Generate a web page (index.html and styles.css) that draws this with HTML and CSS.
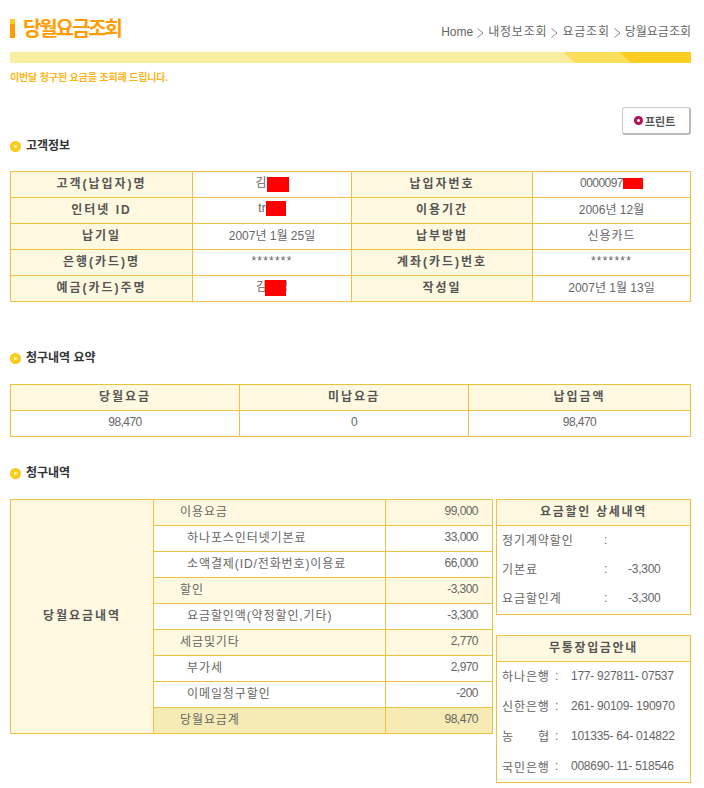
FILE: index.html
```html
<!DOCTYPE html>
<html lang="ko">
<head>
  <meta charset="utf-8">
  <link rel="stylesheet" href="styles.css">
</head>
<body>
  <div class="page">
    <div class="title-row">
      <h1 class="title">당월요금조회</h1>
      <div class="crumbs">
        <span class="home">Home</span>
        <svg class="chev" viewBox="0 0 7 10"><path d="M0.5 0.5 L6 5 L0.5 9.5"/></svg>
        <span>내정보조회</span>
        <svg class="chev" viewBox="0 0 7 10"><path d="M0.5 0.5 L6 5 L0.5 9.5"/></svg>
        <span>요금조회</span>
        <svg class="chev" viewBox="0 0 7 10"><path d="M0.5 0.5 L6 5 L0.5 9.5"/></svg>
        <span class="now">당월요금조회</span>
      </div>
    </div>
    <div class="band"></div>
    <p class="lead">이번달 청구된 요금을 조회해 드립니다.</p>

    <div class="print-row">
      <a class="print-btn"><span class="print-dot"></span>프린트</a>
    </div>

    <h2 class="section first">고객정보</h2>
    <table class="grid customer">
      <tr>
        <th>고객(납입자)명</th>
        <td>김<span class="mask m1"></span></td>
        <th>납입자번호</th>
        <td class="num">0000097<span class="mask m2"></span></td>
      </tr>
      <tr>
        <th>인터넷 ID</th>
        <td>tr<span class="mask m3"></span></td>
        <th>이용기간</th>
        <td>2006년 12월</td>
      </tr>
      <tr>
        <th>납기일</th>
        <td>2007년 1월 25일</td>
        <th>납부방법</th>
        <td class="ko">신용카드</td>
      </tr>
      <tr>
        <th>은행(카드)명</th>
        <td class="stars">*******</td>
        <th>계좌(카드)번호</th>
        <td class="stars">*******</td>
      </tr>
      <tr>
        <th>예금(카드)주명</th>
        <td>김<span class="mask m4"></span>명</td>
        <th>작성일</th>
        <td>2007년 1월 13일</td>
      </tr>
    </table>

    <h2 class="section second">청구내역 요약</h2>
    <table class="grid summary">
      <tr>
        <th>당월요금</th>
        <th>미납요금</th>
        <th>납입금액</th>
      </tr>
      <tr>
        <td class="num">98,470</td>
        <td class="num">0</td>
        <td class="num">98,470</td>
      </tr>
    </table>

    <h2 class="section third">청구내역</h2>
    <div class="bill-wrap">
      <table class="grid bill">
        <tr class="hl">
          <th rowspan="9" class="bill-head">당월요금내역</th>
          <td class="item">이용요금</td>
          <td class="amt">99,000</td>
        </tr>
        <tr>
          <td class="item sub">하나포스인터넷기본료</td>
          <td class="amt">33,000</td>
        </tr>
        <tr>
          <td class="item sub">소액결제(ID/전화번호)이용료</td>
          <td class="amt">66,000</td>
        </tr>
        <tr class="hl">
          <td class="item">할인</td>
          <td class="amt">-3,300</td>
        </tr>
        <tr>
          <td class="item sub">요금할인액(약정할인,기타)</td>
          <td class="amt">-3,300</td>
        </tr>
        <tr class="hl">
          <td class="item">세금및기타</td>
          <td class="amt">2,770</td>
        </tr>
        <tr>
          <td class="item sub">부가세</td>
          <td class="amt">2,970</td>
        </tr>
        <tr>
          <td class="item sub">이메일청구할인</td>
          <td class="amt">-200</td>
        </tr>
        <tr class="total">
          <td class="item">당월요금계</td>
          <td class="amt">98,470</td>
        </tr>
      </table>

      <div class="side">
        <div class="box discount">
          <div class="box-head">요금할인 상세내역</div>
          <div class="box-row"><span>정기계약할인</span><span>:</span><span></span></div>
          <div class="box-row"><span>기본료</span><span>:</span><span class="num">-3,300</span></div>
          <div class="box-row"><span>요금할인계</span><span>:</span><span class="num">-3,300</span></div>
        </div>
        <div class="box bank">
          <div class="box-head">무통장입금안내</div>
          <div class="box-row"><span>하나은행</span><span>:</span><span class="num">177- 927811- 07537</span></div>
          <div class="box-row"><span>신한은행</span><span>:</span><span class="num">261- 90109- 190970</span></div>
          <div class="box-row"><span class="spread"><b>농</b><b>협</b></span><span>:</span><span class="num">101335- 64- 014822</span></div>
          <div class="box-row"><span>국민은행</span><span>:</span><span class="num">008690- 11- 518546</span></div>
        </div>
      </div>
    </div>
  </div>
</body>
</html>
```

FILE: styles.css
```css
* {
  box-sizing: border-box;
}

body {
  margin: 0;
  background: #fff;
  color: #666;
  font-family: "Liberation Sans", "Noto Sans CJK KR", sans-serif;
  font-size: 12px;
}

.page {
  width: 704px;
  height: 788px;
  padding: 0 13px 0 10px;
  overflow: hidden;
}

/* top title */
.title-row {
  display: flex;
  justify-content: space-between;
  align-items: flex-start;
  height: 52px;
  padding-top: 19px;
}

.title {
  margin: 0;
  height: 19px;
  padding-left: 8px;
  border-left: 5px solid #ff9c00;
  color: #ff9c00;
  font-size: 20px;
  line-height: 20px;
  letter-spacing: -2.1px;
  font-weight: 700;
  position: relative;
}

.title::before {
  content: '';
  position: absolute;
  left: -5px;
  top: 0;
  width: 5px;
  height: 5px;
  background: #ffcc22;
}

.crumbs {
  display: flex;
  align-items: center;
  gap: 4px;
  padding-top: 5px;
  color: #666;
  line-height: 17px;
  letter-spacing: 0.8px;
  white-space: nowrap;
}

.crumbs .home,
.crumbs .now {
  letter-spacing: 0;
}

.chev {
  width: 7px;
  height: 10px;
  fill: none;
  stroke: #777;
  stroke-width: 0.9;
}

.band {
  height: 11px;
  background: linear-gradient(45deg, #f9eea0 0%, #f9eea0 81.6%, #fbdf5c 81.6%, #fbdf5c 89.7%, #fecd21 89.7%, #fecd21 100%);
}

.lead {
  margin: 8px 0 0;
  color: #fdb515;
  font-size: 10px;
  line-height: 14px;
  font-weight: 700;
  letter-spacing: -0.15px;
}

/* print button */
.print-row {
  display: flex;
  justify-content: flex-end;
  margin-top: 22px;
}

.print-btn {
  display: flex;
  align-items: center;
  width: 69px;
  height: 28px;
  padding-left: 11px;
  border: 1px solid #ccc;
  border-right: 2px solid #bbb;
  border-bottom: 2px solid #bbb;
  border-radius: 3px;
  color: #555;
  font-size: 11px;
  font-weight: 700;
}

.print-dot {
  width: 9px;
  height: 9px;
  margin-right: 2px;
  border-radius: 50%;
  background: radial-gradient(circle, #fff 0 1px, #c4125f 1.8px, #8c0c3e 100%);
}

/* section headings */
.section {
  display: flex;
  align-items: center;
  margin: 0;
  height: 16px;
  color: #333;
  font-size: 12px;
  line-height: 16px;
  font-weight: 700;
  letter-spacing: 0;
}

.section::before {
  content: '';
  width: 11px;
  height: 11px;
  margin-right: 5px;
  border-radius: 50%;
  background: radial-gradient(circle, #fff6b8 0 1px, #ffd21e 2px, #fdb80f 100%);
}

.section.first {
  margin-top: 3px;
}

.section.second {
  margin-top: 48px;
}

.section.third {
  margin-top: 28px;
}

/* tables */
.grid {
  border-collapse: collapse;
  table-layout: fixed;
  width: 681px;
}

.grid th,
.grid td {
  height: 26px;
  padding: 0 0 4px;
  border: 1px solid #eec23c;
  text-align: center;
  font-weight: 400;
  white-space: nowrap;
}

.grid th {
  background: #fef9e0;
  color: #555;
  font-weight: 700;
  letter-spacing: 2px;
}

.customer {
  margin-top: 17px;
}

.customer th:nth-child(1) { width: 182px; }
.customer td:nth-child(2) { width: 159px; }
.customer th:nth-child(3) { width: 181px; }

.ko {
  letter-spacing: 0.9px;
}

.stars {
  letter-spacing: 1.2px;
}

.mask {
  display: inline-block;
  vertical-align: middle;
  background: #f00;
}

.m1 { width: 22px; height: 15px; }
.m2 { width: 20px; height: 11px; }
.m3 { width: 20px; height: 15px; }
.m4 { width: 21px; height: 16px; margin: 0 -9px 0 -2px; position: relative; }

.summary {
  margin-top: 18px;
}

.summary th:nth-child(1),
.summary th:nth-child(2) {
  width: 229px;
}

.num {
  letter-spacing: -0.55px;
}

.bill-wrap {
  display: flex;
  align-items: flex-start;
  gap: 3px;
  margin-top: 18px;
}

.bill {
  flex: none;
  width: 483px;
}

.grid .bill-head {
  width: 143px;
}

.grid .item {
  padding-left: 26px;
  text-align: left;
  letter-spacing: 0.9px;
}

.grid .item.sub {
  padding-left: 33px;
}

.grid .amt {
  width: 107px;
  padding-right: 14px;
  text-align: right;
  letter-spacing: -0.55px;
}

.hl td {
  background: #fef9e0;
}

.total td {
  background: #f6ebb5;
}

/* right side boxes */
.side {
  flex: none;
  width: 195px;
  display: flex;
  flex-direction: column;
  gap: 20px;
}

.box {
  border: 1px solid #eec23c;
}

.box-head {
  height: 26px;
  border-bottom: 1px solid #eec23c;
  background: #fef9e0;
  color: #555;
  font-weight: 700;
  line-height: 24px;
  text-align: center;
  letter-spacing: 1.7px;
}

.box-row {
  display: grid;
  align-items: center;
  padding-left: 5px;
  letter-spacing: 0.9px;
}

.box-row .num {
  letter-spacing: -0.25px;
}

.discount {
  height: 116px;
}

.discount .box-row {
  grid-template-columns: 102px 24px 1fr;
  height: 29px;
  padding-bottom: 2px;
}

.bank {
  height: 148px;
}

.bank .box-row {
  grid-template-columns: 53px 16px 1fr;
  height: 30.2px;
  padding-bottom: 3px;
}

.spread {
  display: flex;
  justify-content: space-between;
  width: 48px;
}

.spread b {
  font-weight: 400;
}
```
